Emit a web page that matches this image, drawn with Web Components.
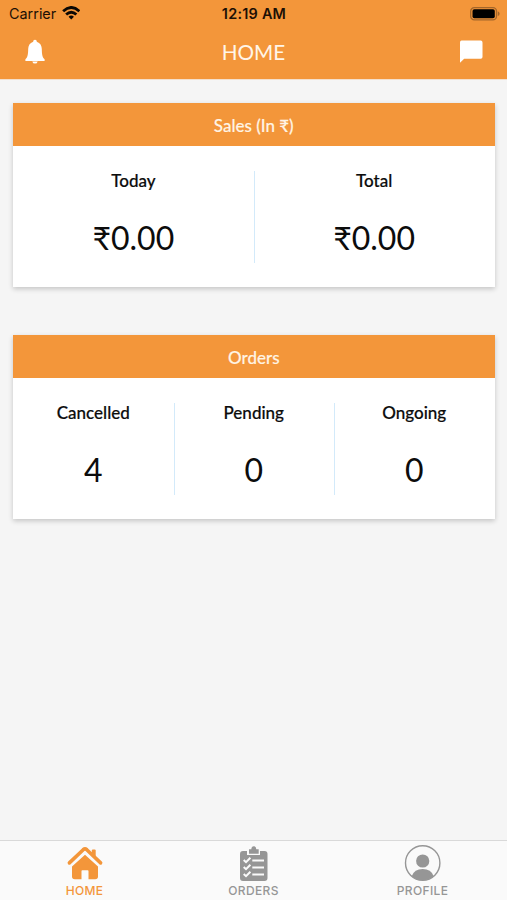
<!DOCTYPE html>
<html lang="en">
<head>
<meta charset="utf-8">
<title>Home</title>
<style>
html, body { margin: 0; height: 100%; }
body { font-family: Lato, "Open Sans", sans-serif; color: #0c0c0c; background: #f5f5f5; overflow: hidden; }
</style>
</head>
<body>
<home-screen></home-screen>
<script>
const define = (name, html) => {
  const template = document.createElement('template');
  template.innerHTML = html;
  customElements.define(name, class extends HTMLElement {
    constructor() {
      super();
      this.attachShadow({ mode: 'open' }).append(template.content.cloneNode(true));
    }
  });
};

define('status-bar', `
<style>
:host { display: grid; grid-template-columns: 1fr auto 1fr; align-items: center; height: 27px; padding: 0 7px 0 9px; font: 14.4px/27px Inter, sans-serif; color: #1c1005; box-sizing: border-box; }
.left { display: flex; align-items: center; gap: 5.5px; }
.time { font-weight: 600; letter-spacing: .25px; margin-right: 1px; }
.battery { justify-self: end; }
svg { display: block; }
</style>
<div class="left"><span>Carrier</span>
<svg width="18.5" height="14.5" viewBox="0 0 19 15" fill="none" stroke="#0b0804" stroke-width="2.9"><path d="M1.1 5.4Q9.5-2.4 17.9 5.4"/><path d="M4.2 8.8Q9.5 4 14.8 8.8"/><path d="M9.5 14L6.7 11.2Q9.5 8.7 12.3 11.2Z" fill="#0b0804" stroke="none"/></svg></div>
<span class="time">12:19 AM</span>
<svg class="battery" width="30" height="14" viewBox="0 0 30 14"><rect x=".7" y=".7" width="25.8" height="12.1" rx="3.6" fill="none" stroke="#a4662a" stroke-width="1.3"/><rect x="2.5" y="2.3" width="22.3" height="8.9" rx="1.8"/><path d="M27.8 4.3Q29.6 5 29.6 6.7T27.8 9.1Z" fill="#a4662a"/></svg>`);

define('nav-bar', `
<style>
:host { display: grid; grid-template-columns: 1fr auto 1fr; align-items: center; height: 50px; padding: 0 24px; box-sizing: border-box; color: #fff5e8; }
.title { font-size: 20.7px; line-height: 50px; }
.end { justify-self: end; }
::slotted(svg) { display: block; }
</style>
<slot name="start"></slot><span class="title"><slot></slot></span><span class="end"><slot name="end"></slot></span>`);

define('stat-item', `
<style>
:host { display: flex; flex: 1 1 0; flex-direction: column; align-items: center; height: 92px; }
.label { font-size: 17px; line-height: 20px; font-weight: 500; -webkit-text-stroke: .2px; }
.value { font-size: 32px; line-height: 40px; margin-top: 27px; }
:host([divided]) { background: linear-gradient(#d3eafa, #d3eafa) left / 1px 100% no-repeat; }
</style>
<div class="label"><slot name="label"></slot></div><div class="value"><slot></slot></div>`);

define('stat-card', `
<style>
:host { display: block; height: 183.5px; background: #fff; box-shadow: 0 2px 5px rgba(0,0,0,.2); }
header { height: 43px; background: #f3963a; color: #fff4e4; text-align: center; font-size: 17px; line-height: 45px; font-weight: 500; -webkit-text-stroke: .15px; }
.stats { display: flex; padding-top: 25px; }
</style>
<header><slot name="title"></slot></header><div class="stats"><slot></slot></div>`);

define('tab-item', `
<style>
:host { display: flex; flex: 1 1 0; flex-direction: column; align-items: center; color: #969696; padding-top: 4px; font: 500 12px/14px Inter, sans-serif; letter-spacing: .35px; }
:host([active]) { color: #f3963a; }
::slotted(svg) { display: block; width: 38px; height: 38px; }
.label { margin-top: 1px; }
</style>
<slot name="icon"></slot><div class="label"><slot></slot></div>`);

define('tab-bar', `
<style>
:host { display: flex; height: 60px; box-sizing: border-box; border-top: 1px solid #d9d9d9; background: #fafafa; }
</style><slot></slot>`);

define('home-screen', `
<style>
:host { display: flex; flex-direction: column; height: 900px; }
.top { height: 80px; background: #f3963a; border-bottom: 1px solid #f4dfcb; box-sizing: border-box; flex: none; }
main { flex: 1; padding: 23.4px 12.5px 0 13px; display: flex; flex-direction: column; gap: 48.5px; }
</style>
<div class="top">
<status-bar></status-bar>
<nav-bar>
<svg slot="start" width="22" height="26" viewBox="0 0 22 26" fill="#fff"><path d="M11 .7C12.2.7 12.8 1.5 12.8 2.7C16.3 3.8 17.7 6.6 17.8 10C17.9 15.5 18.4 18.4 20.6 20.3V22H1.4V20.3C3.6 18.4 4.1 15.5 4.2 10C4.3 6.6 5.7 3.8 9.2 2.7C9.2 1.5 9.8.7 11 .7ZM8.3 22.4H13.7Q13.2 24.6 11 24.6T8.3 22.4Z"/></svg>
HOME
<svg slot="end" width="24" height="24" viewBox="0 0 24 24" fill="#fff"><path d="M2.5 .6H21.7Q23.5 .6 23.5 2.4V17Q23.5 18.8 21.7 18.8H5.2L1 22.8V2.4Q1 .6 2.5 .6Z"/></svg>
</nav-bar>
</div>
<main>
<stat-card><span slot="title">Sales (In ₹)</span>
<stat-item><span slot="label">Today</span>₹0.00</stat-item>
<stat-item divided><span slot="label">Total</span>₹0.00</stat-item>
</stat-card>
<stat-card><span slot="title">Orders</span>
<stat-item><span slot="label">Cancelled</span>4</stat-item>
<stat-item divided><span slot="label">Pending</span>0</stat-item>
<stat-item divided><span slot="label">Ongoing</span>0</stat-item>
</stat-card>
</main>
<tab-bar>
<tab-item active><svg slot="icon" viewBox="0 0 38 38" fill="currentColor"><path d="M25.8 10V5.6Q25.8 4.5 26.9 4.5H28.6Q29.7 4.5 29.7 5.6V14Z"/><path d="M3.4 17.9L17.2 4.7Q19 3.1 20.8 4.7L34.6 17.9" fill="none" stroke="currentColor" stroke-width="3.6" stroke-linecap="round"/><path d="M19 9.8L32 21.6V31.5Q32 34.3 29.2 34.3H22.5V26Q22.5 25.2 21.7 25.2H16.3Q15.5 25.2 15.5 26V34.3H8.8Q6 34.3 6 31.5V21.6Z"/></svg>HOME</tab-item>
<tab-item><svg slot="icon" viewBox="0 0 38 38" fill="currentColor"><path d="M8 6H12V10H25V6H29.5Q32.5 6 32.5 9V33Q32.5 36 29.5 36H8Q5 36 5 33V9Q5 6 8 6Z"/><path d="M14 4.3H16.3Q16.5 1.3 18.8 1.3T21.3 4.3H23.7V8.7H14Z"/><g fill="none" stroke="#fafafa"><path stroke-width="2" d="M8.7 15L11 17.2L15.4 12.7M8.7 22L11 24.2L15.4 19.7M8.7 29L11 31.2L15.4 26.7"/><path stroke-width="2.2" d="M17.3 15.5H29M17.3 22.5H29M17.3 29.5H29"/></g></svg>ORDERS</tab-item>
<tab-item><svg slot="icon" viewBox="0 0 38 38" fill="currentColor"><circle cx="18.7" cy="18" r="17.2" fill="none" stroke="currentColor" stroke-width="1.4"/><circle cx="18.7" cy="16" r="6.6"/><path d="M7.7 31.2Q10.3 24 18.7 24T29.7 31.2Q25.1 35.2 18.7 35.2T7.7 31.2Z"/></svg>PROFILE</tab-item>
</tab-bar>`);
</script>
</body>
</html>
